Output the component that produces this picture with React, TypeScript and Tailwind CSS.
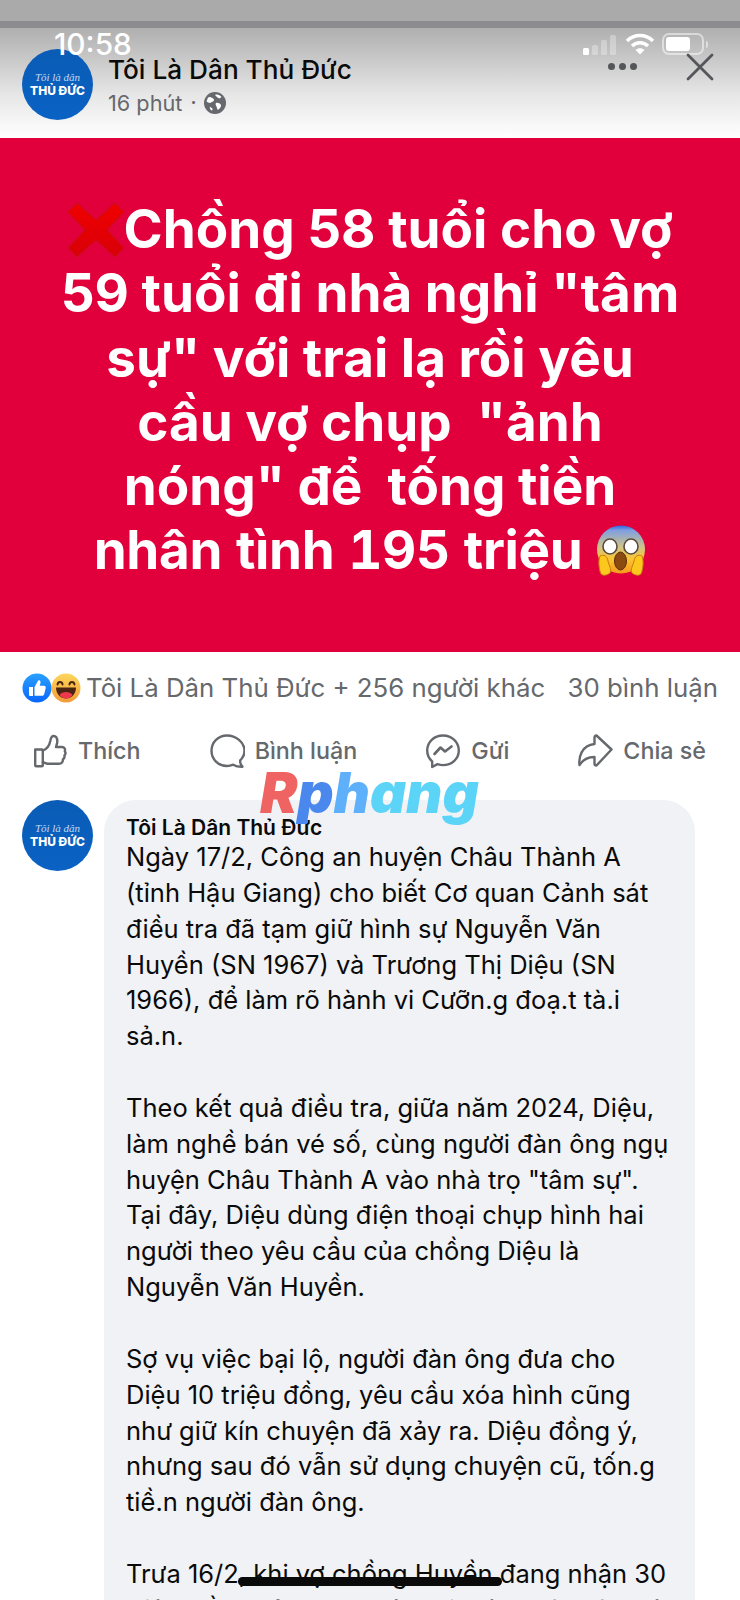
const Avatar = () => (
  <div className="flex h-[71px] w-[71px] shrink-0 flex-col items-center justify-center rounded-full bg-gradient-to-b from-[#0a5cb5] to-[#0a62c4] text-white">
    <span className="mt-[1px] font-['Liberation_Serif',serif] text-[11px] italic leading-[12px] text-[#c5d9f0]">Tôi là dân</span>
    <span className="font-['Inter',sans-serif] text-[12px] font-extrabold leading-[16px]">THỦ ĐỨC</span>
  </div>
);

const CrossEmoji = () => (
  <svg width="56" height="54" viewBox="0 0 56 54" className="inline-block align-[-9px]">
    <defs>
      <linearGradient id="cr" x1="0" y1="0" x2="0" y2="1">
        <stop offset="0" stopColor="#f00000" />
        <stop offset="1" stopColor="#d80008" />
      </linearGradient>
    </defs>
    <path d="M9 0 L28 17 L47 0 L56 9 L39 27 L56 45 L47 54 L28 37 L9 54 L0 45 L17 27 L0 9 Z" fill="url(#cr)" stroke="#c41018" strokeWidth="1" />
  </svg>
);

const ScreamEmoji = () => (
  <svg width="50" height="52" viewBox="0 0 50 52" className="inline-block align-[-8px]">
    <defs>
      <linearGradient id="sc" x1="0" y1="0" x2="0" y2="1">
        <stop offset="0" stopColor="#2f62e0" />
        <stop offset="0.1" stopColor="#7f9fe0" />
        <stop offset="0.45" stopColor="#cfc48a" />
        <stop offset="0.7" stopColor="#fbc531" />
        <stop offset="1" stopColor="#f59a1e" />
      </linearGradient>
    </defs>
    <circle cx="25" cy="24.5" r="24" fill="url(#sc)" />
    <ellipse cx="14" cy="21.500" rx="7" ry="7.500" fill="#fff" stroke="#5a4a3a" strokeWidth="1.600" />
    <ellipse cx="35" cy="21.500" rx="7" ry="7.500" fill="#fff" stroke="#5a4a3a" strokeWidth="1.600" />
    <ellipse cx="24.500" cy="36" rx="6" ry="9" fill="#8a4a10" stroke="#5a2f08" strokeWidth="1" />
    <path d="M4 31 C8 29 11 31 12 36 C13 41 16 44 14 48 C10 51 6 51 4.500 48 C3 43 2 36 4 31 Z" fill="#fdc81e" stroke="#c47c10" strokeWidth="1" />
    <path d="M46 31 C42 29 39 31 38 36 C37 41 34 44 36 48 C40 51 44 51 45.500 48 C47 43 48 36 46 31 Z" fill="#fdc81e" stroke="#c47c10" strokeWidth="1" />
  </svg>
);

const LikeReaction = () => (
  <svg width="30" height="30" viewBox="0 0 30 30" className="relative z-10 -mr-[1px]">
    <defs>
      <linearGradient id="lk" x1="0" y1="0" x2="0" y2="1">
        <stop offset="0" stopColor="#2aa0ff" />
        <stop offset="1" stopColor="#0866ff" />
      </linearGradient>
    </defs>
    <circle cx="15" cy="15" r="14.5" fill="url(#lk)" />
    <path d="M7 14h4v9H8a1 1 0 0 1-1-1zM12.5 14l3.6-6.2c.5-.9 2.4-.5 2.4 1.2 0 1.4-.5 2.7-.7 3.7h4.2c1.3 0 2 1.1 1.7 2.2l-1.5 6.3c-.2.9-1 1.5-2 1.5h-7.7z" fill="#fff" />
  </svg>
);

const HahaReaction = () => (
  <svg width="30" height="30" viewBox="0 0 30 30">
    <defs>
      <linearGradient id="hh" x1="0" y1="0" x2="0" y2="1">
        <stop offset="0" stopColor="#fdd75c" />
        <stop offset="1" stopColor="#f29a38" />
      </linearGradient>
    </defs>
    <circle cx="15" cy="15" r="14.5" fill="url(#hh)" />
    <path d="M5 14.5h20c0 6.5-4.5 11-10 11s-10-4.5-10-11z" fill="#4a2410" />
    <path d="M8.5 22c1.5-2.2 4-3 6.5-3s5 .8 6.5 3c-1.6 2.3-3.9 3.5-6.5 3.5S10 24.300 8.500 22z" fill="#f0384d" />
    <path d="M6.500 11.500c.6-3.400 4.500-3.400 5.100 0M18.400 11.500c.6-3.400 4.500-3.400 5.100 0" fill="none" stroke="#4a2410" strokeWidth="1.900" strokeLinecap="round" />
  </svg>
);

const ThumbIcon = () => (
  <svg width="36" height="36" viewBox="0 0 36 36" fill="none" stroke="#65686c" strokeWidth="2.400" strokeLinejoin="round" strokeLinecap="round">
    <path d="M3.200 16.500h6.600a1 1 0 0 1 1 1v14.800a1 1 0 0 1-1 1H4.200a1 1 0 0 1-1-1z" />
    <path d="M10.800 17.500c3-1 6.500-4.500 7.500-9.500.3-1.700.7-5 3.300-5 2.900 0 3.700 3 3.700 5.500 0 2-1 4.200-1.300 5.500h6c2.500 0 3.600 2.300 2.800 4.200.9 1.300 1 3-.4 4.300.4 1.600-.2 3-1.500 3.800.2 2.500-1.100 4.500-4 4.500H17c-2.500 0-4-1.200-6.200-1.500" />
  </svg>
);

const CommentIcon = () => (
  <svg width="36" height="36" viewBox="0 0 36 36" fill="none" stroke="#65686c" strokeWidth="2.400" strokeLinejoin="round">
    <path d="M18 2.500C9.300 2.500 2.500 9.200 2.500 17.800 2.500 26.300 9.300 33 18 33c2.200 0 4.300-.5 6.200-1.300 2.500 1.500 6 2.100 9.300 2-1.600-1.500-2.500-3.600-2.300-6.300 2.700-2.600 4.300-6 4.300-9.600C35.500 9.200 26.700 2.500 18 2.500z" />
  </svg>
);

const MessengerIcon = () => (
  <svg width="36" height="36" viewBox="0 0 36 36" fill="none" stroke="#65686c" strokeWidth="2.400" strokeLinejoin="round" strokeLinecap="round">
    <path d="M18 2.500C9 2.500 2.200 9 2.200 17.500c0 4.500 1.900 8.300 5 11v5.500l5.300-2.900c1.700.6 3.500 1 5.500 1 9 0 15.800-6.500 15.800-14.600S27 2.500 18 2.500z" />
    <path d="M9.500 21l6-6.500 4.500 4 6.500-5" strokeWidth="2.600" />
  </svg>
);

const ShareIcon = () => (
  <svg width="36" height="36" viewBox="0 0 36 36" fill="none" stroke="#65686c" strokeWidth="2.400" strokeLinejoin="round" strokeLinecap="round">
    <path d="M19.500 2.500 L34.500 16.500 L19.500 32.500 C18 32.500 17.500 31.500 17.500 30.500 V24 C11 24 6 26.500 2.500 32 C1.500 24 4.500 12.500 17.500 11 V5 C17.500 3.500 18.500 2.500 19.500 2.500 Z" />
  </svg>
);

const Globe = () => (
  <svg width="22" height="22" viewBox="0 0 22 22">
    <circle cx="11" cy="11" r="11" fill="#65686c" />
    <path d="M4 5.500c2-1 3-.5 4 .5 1 .5 2 .5 2 2s-2 1.500-3 2.500-3 0-4.500-1zM11 3c2-1 5 0 6.500 2l-2 1.500-2-1zM12 11c2-.5 4 .5 5 2 .5 1-1 3.500-2.500 4.500s-1.500-2-2-3-1.500-2.500-.5-3.500zM6 15c1 0 2 1 2.500 2s-.5 2-1.500 1-1.500-2-1-3z" fill="#fff" />
  </svg>
);

const PostLine = ({ children }: { children: React.ReactNode }) => <div className="whitespace-nowrap">{children}</div>;

const Gap = () => <div className="h-[35.850px]" />;

export default function App() {
  return (
    <div className="relative h-[1600px] w-[740px] overflow-hidden bg-white font-['Inter',sans-serif]">
      <div className="h-[21px] bg-[#aaaaaa]" />
      <div className="h-[7px] bg-[#8c8c8e]" />

      <header className="flex h-[110px] items-start bg-gradient-to-b from-[#afafaf] via-[#e6e6e6] via-60% to-white pl-[22px] pt-[21px]">
        <Avatar />
        <div className="ml-[15px] mt-[5px]">
          <div className="text-[26.200px] font-medium leading-[32px] text-[#0a0a0a]">Tôi Là Dân Thủ Đức</div>
          <div className="mt-[3px] flex items-center text-[21.700px] leading-[28px] text-[#65686c]">
            <span>16 phút</span>
            <span className="mx-[8px] text-[18px] font-bold">·</span>
            <Globe />
          </div>
        </div>
      </header>

      <section className="flex h-[514px] flex-col items-center bg-[#e1003c] pt-[59px] text-center text-[53px] font-bold leading-[64.300px] text-white">
        <div className="whitespace-nowrap"><CrossEmoji />Chồng 58 tuổi cho vợ</div>
        <div className="whitespace-nowrap">59 tuổi đi nhà nghỉ "tâm</div>
        <div className="whitespace-nowrap">sự" với trai lạ rồi yêu</div>
        <div className="whitespace-pre">cầu vợ chụp  "ảnh</div>
        <div className="whitespace-pre">nóng" để  tống tiền</div>
        <div className="whitespace-nowrap tabular-nums tracking-[-0.350px]">nhân tình 195 triệu <ScreamEmoji /></div>
      </section>

      <div className="flex h-[72px] items-center justify-between pl-[22px] pr-[22px] text-[25.800px] text-[#65686c]">
        <div className="flex items-center">
          <LikeReaction />
          <HahaReaction />
          <span className="ml-[5px]">Tôi Là Dân Thủ Đức + 256 người khác</span>
        </div>
        <span>30 bình luận</span>
      </div>

      <div className="flex h-[54px] items-center justify-between pl-[32px] pr-[34px] text-[23.300px] font-medium text-[#65686c]">
        <div className="flex items-center gap-[10px]"><ThumbIcon /><span>Thích</span></div>
        <div className="flex items-center gap-[10px]"><CommentIcon /><span>Bình luận</span></div>
        <div className="flex items-center gap-[10px]"><MessengerIcon /><span>Gửi</span></div>
        <div className="flex items-center gap-[10px]"><ShareIcon /><span>Chia sẻ</span></div>
      </div>

      <div className="flex items-start pl-[22px] pt-[22px]">
        <Avatar />
        <article className="ml-[11px] h-[900px] w-[591px] rounded-[32px] bg-[#f0f2f5] pl-[22px] pt-[16px] text-[25.500px] leading-[35.850px] text-[#0a0a0a]">
          <div className="text-[21px] font-semibold leading-[23px]">Tôi Là Dân Thủ Đức</div>
          <PostLine>Ngày 17/2, Công an huyện Châu Thành A</PostLine>
          <PostLine>(tỉnh Hậu Giang) cho biết Cơ quan Cảnh sát</PostLine>
          <PostLine>điều tra đã tạm giữ hình sự Nguyễn Văn</PostLine>
          <PostLine>Huyền (SN 1967) và Trương Thị Diệu (SN</PostLine>
          <PostLine>1966), để làm rõ hành vi Cưỡn.g đoạ.t tà.i</PostLine>
          <PostLine>sả.n.</PostLine>
          <Gap />
          <PostLine>Theo kết quả điều tra, giữa năm 2024, Diệu,</PostLine>
          <PostLine>làm nghề bán vé số, cùng người đàn ông ngụ</PostLine>
          <PostLine>huyện Châu Thành A vào nhà trọ "tâm sự".</PostLine>
          <PostLine>Tại đây, Diệu dùng điện thoại chụp hình hai</PostLine>
          <PostLine>người theo yêu cầu của chồng Diệu là</PostLine>
          <PostLine>Nguyễn Văn Huyền.</PostLine>
          <Gap />
          <PostLine>Sợ vụ việc bại lộ, người đàn ông đưa cho</PostLine>
          <PostLine>Diệu 10 triệu đồng, yêu cầu xóa hình cũng</PostLine>
          <PostLine>như giữ kín chuyện đã xảy ra. Diệu đồng ý,</PostLine>
          <PostLine>nhưng sau đó vẫn sử dụng chuyện cũ, tốn.g</PostLine>
          <PostLine>tiề.n người đàn ông.</PostLine>
          <Gap />
          <PostLine>Trưa 16/2, khi vợ chồng Huyền đang nhận 30</PostLine>
          <PostLine>triệu đồng của nạn nhân tại một quán cà phê</PostLine>
        </article>
      </div>

      {/* iOS status bar */}
      <span className="absolute left-[54px] top-[28px] text-[29.800px] font-medium leading-[32px] text-white">10:58</span>
      <div className="absolute left-[583px] top-[33px] flex h-[22px] items-end gap-[3px]">
        <span className="h-[7px] w-[6px] rounded-[1.500px] bg-white" />
        <span className="h-[10px] w-[6px] rounded-[1.500px] bg-white/30" />
        <span className="h-[15px] w-[6px] rounded-[1.500px] bg-white/30" />
        <span className="h-[20px] w-[6px] rounded-[1.500px] bg-white/30" />
      </div>
      <svg className="absolute left-[625px] top-[33px]" width="30" height="22" viewBox="0 0 30 22" fill="none" stroke="#fff" strokeWidth="3.500">
        <path d="M2 8C9.500 .800 20.500 .800 28 8" />
        <path d="M7 13C11.500 8.500 18.500 8.500 23 13" />
        <path d="M15 21.500 10.500 17c2.500-2.200 6.500-2.200 9 0z" fill="#fff" stroke="none" />
      </svg>
      <div className="absolute left-[662px] top-[33px] flex items-center">
        <div className="flex h-[22px] w-[42px] items-stretch rounded-[7px] border-2 border-white/50 p-[2px]">
          <div className="w-[24px] rounded-[3px] bg-white" />
        </div>
        <div className="ml-[2px] h-[7px] w-[2px] rounded-r-full bg-white/50" />
      </div>

      {/* Post actions over the status bar */}
      <div className="absolute left-[608px] top-[63px] flex gap-[4px]">
        <span className="h-[7px] w-[7px] rounded-full bg-[#55565a]" />
        <span className="h-[7px] w-[7px] rounded-full bg-[#55565a]" />
        <span className="h-[7px] w-[7px] rounded-full bg-[#55565a]" />
      </div>
      <svg className="absolute left-[686px] top-[53px]" width="28" height="28" viewBox="0 0 28 28" stroke="#55565a" strokeWidth="2.800" strokeLinecap="round">
        <path d="M2 2 L26 26 M26 2 L2 26" />
      </svg>

      {/* Watermark */}
      <span className="absolute left-[260px] top-[756px] whitespace-nowrap pr-[8px] text-[56px] font-black italic leading-[74px]">
        <span className="text-[#ef6462]">R</span>
        <span className="text-[#4a88ee]">p</span>
        <span className="text-[#5eb0fa]">h</span>
        <span className="text-[#5cd4f8]">ang</span>
      </span>

      {/* Home indicator */}
      <div className="absolute left-[238px] top-[1577px] h-[9px] w-[264px] rounded-full bg-[#0a0a0a]" />
    </div>
  );
}
